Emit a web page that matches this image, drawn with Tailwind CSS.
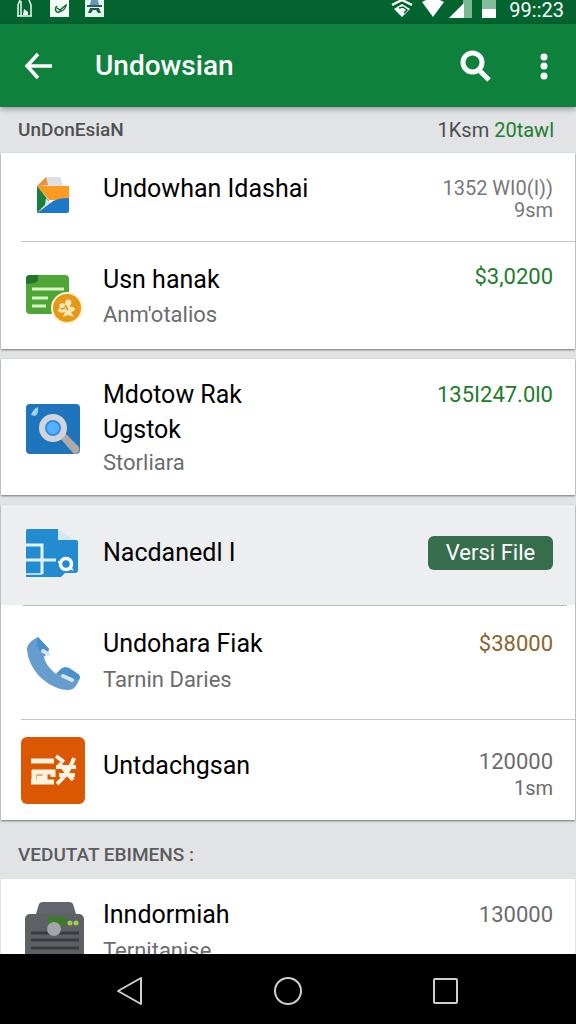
<!DOCTYPE html>
<html lang="id">
<head>
  <meta charset="UTF-8">
  <meta name="viewport" content="width=device-width, initial-scale=1.0">
  <title>Undowsian</title>
  <script src="https://cdn.jsdelivr.net/npm/@tailwindcss/browser@4"></script>
</head>
<body class="flex h-screen flex-col overflow-hidden bg-[#e2e3e5] font-['Roboto',sans-serif] text-black">

  <!-- Status bar -->
  <div class="flex h-6 shrink-0 items-start justify-between overflow-hidden bg-[#03642f] pr-3 pl-4 text-white">
    <div class="flex gap-4">
      <svg class="h-[18px] w-[18px]" viewBox="0 0 18 18" fill="none" stroke="#e9fff0" stroke-width="1.500">
        <path d="M4 0 2 5v11h13V5l-2-5M5 1v15M1 16h15" />
        <path d="M8 9 7 15h5v-3z" fill="#fff" stroke="none" />
      </svg>
      <svg class="h-[18px] w-[19px]" viewBox="0 0 19 18">
        <path d="M0 0h19v17H0z" fill="#f2fff5" />
        <path d="M7 6C4 9 6 13 9 12c4-1 7-4 7-7l-6 5-3-2" fill="none" stroke="#17673a" stroke-width="1.500" />
      </svg>
      <svg class="h-[18px] w-[19px]" viewBox="0 0 19 18">
        <path d="M0 0h19v17H0z" fill="#dffbea" />
        <path d="M6 0h7l1 5H5z" fill="#6c94b8" />
        <path d="M2 5h15v2H2z" fill="#34566d" />
        <path d="M5 8h9l2 5h-3l-2-3H8l-2 3H3z" fill="#1f5c42" />
      </svg>
    </div>
    <div class="flex">
      <svg class="mr-2 h-[18px] w-[22px]" viewBox="0 0 22 18" fill="none" stroke="#fff">
        <path d="M1 5 11 0l10 5" stroke-width="2.500" />
        <path d="m3 9 8-5 8 5-8 8z" fill="#fff" stroke="none" />
        <path d="m8 8 4-1 4 3-3 3" stroke="#03642f" stroke-width="1.500" />
      </svg>
      <svg class="mr-1 h-[18px] w-[24px]" viewBox="0 0 24 18"><path d="M1 2Q12-4 23 2L12 17z" fill="#fff" /></svg>
      <svg class="mr-2 h-[18px] w-[24px]" viewBox="0 0 24 18">
        <path d="M14 0h9v18h-9z" fill="#7cb893" />
        <path d="M0 18 15 3v15z" fill="#fff" />
      </svg>
      <svg class="mr-3 h-[18px] w-[16px]" viewBox="0 0 16 18">
        <path d="M1 0h14v9H1z" fill="#81bc98" />
        <path d="M1 9h14v9H1z" fill="#fff" />
      </svg>
      <span class="text-[20px] leading-5">99::23</span>
    </div>
  </div>

  <!-- App bar -->
  <header class="relative z-10 flex h-[83px] shrink-0 items-center bg-[#0e823d] pr-3 pl-[18px] text-white shadow-[0_2px_6px_rgba(0,0,0,0.35)]">
    <button type="button" aria-label="Back" class="flex h-10 w-10 items-center justify-center">
      <svg class="h-7 w-7" viewBox="0 0 28 28" fill="none" stroke="#fff" stroke-width="3.500">
        <path d="M28 14H3M14 2 3 14l11 12" />
      </svg>
    </button>
    <h1 class="flex-1 pl-[37px] text-[28px] leading-9 font-medium">Undowsian</h1>
    <button type="button" aria-label="Search" class="flex h-10 w-10 items-center justify-center">
      <svg class="h-8 w-8" viewBox="0 0 32 32" fill="none" stroke="#fff">
        <circle cx="12.500" cy="12.500" r="9.500" stroke-width="5" />
        <path d="m19 20 10 10" stroke-width="5" />
      </svg>
    </button>
    <button type="button" aria-label="More options" class="ml-7 flex h-10 w-10 items-center justify-center">
      <svg class="h-7 w-2" viewBox="0 0 8 28" fill="#fff">
        <circle cx="4" cy="5" r="3.500" /><circle cx="4" cy="14" r="3.500" /><circle cx="4" cy="24" r="3.500" />
      </svg>
    </button>
  </header>

  <main class="min-h-0 flex-1 overflow-hidden">
    <div class="flex h-[46px] items-center justify-between pr-[22px] pl-[18px]">
      <h2 class="text-[19px] font-medium text-[#505154]">UnDonEsiaN</h2>
      <p class="text-[20px] text-[#4c4d50]">1Ksm <span class="text-[#207d30]">20tawl</span></p>
    </div>

    <ul class="mx-px bg-white shadow-[0_1px_2px_rgba(0,0,0,0.5)]">
      <li class="flex h-[88px] pr-[22px] pl-5">
        <svg class="mt-[23px] h-10 w-16 shrink-0" viewBox="0 0 64 40">
          <path d="m16 10 10-9h13l3 9v8H16z" fill="#dedfe3" />
          <path d="m16 10 9-9 2 8z" fill="#e9903a" />
          <path d="M16 10h32v14H28z" fill="#fb9b22" />
          <path d="M16 10v27l12-12z" fill="#17813b" />
          <path d="m25 22 4 5-5 2z" fill="#dbe7ee" />
          <path d="M16 37 32 25q6-3 16-3v13q0 2-2 2z" fill="#1a79c8" />
        </svg>
        <p class="flex-1 pt-5 pl-[18px] text-[25px] leading-8">Undowhan Idashai</p>
        <p class="pt-6 text-right text-[20px] leading-[22px] text-[#77787a]">1352 WI0(I))<br>9sm</p>
      </li>
      <li class="ml-5 border-t border-[#c4c5c7]"></li>
      <li class="flex h-[107px] pr-[22px] pl-5">
        <svg class="mt-8 h-[52px] w-16 shrink-0" viewBox="0 0 64 52">
          <rect x="5" y="1" width="43" height="39" rx="4" fill="#4fa535" />
          <path d="M5 10V5q0-4 4-4h8v6q-4 3-9 3z" fill="#28732a" />
          <path d="M11 15h32M11 24h16M11 32h14" stroke="#d8f5c5" stroke-width="3" />
          <circle cx="46" cy="34" r="16" fill="#fff3cf" />
          <circle cx="46" cy="34" r="14" fill="#e69818" />
          <path d="M45 26c6-2 7 4 3 7 7-1 8 4 2 5l3 5-6-2-5 2 2-5c-7 2-9-2-5-4-2-4 1-6 5-4z" fill="#ffe9b5" />
          <path d="m44 31 3 5m-7-1 4-1" stroke="#db8b18" stroke-width="1.500" />
        </svg>
        <div class="flex-1 pt-5 pl-[18px]">
          <p class="text-[25px] leading-[35px]">Usn hanak</p>
          <p class="text-[22px] leading-9 text-[#6b6c6e]">Anm'otalios</p>
        </div>
        <p class="pt-[19px] text-[22px] leading-8 text-[#1c7d2a]">$3,0200</p>
      </li>
    </ul>

    <ul class="mx-px mt-[10px] bg-white shadow-[0_1px_2px_rgba(0,0,0,0.5)]">
      <li class="flex h-[136px] pr-[22px] pl-5">
        <svg class="mt-[44px] h-[52px] w-16 shrink-0" viewBox="0 0 64 52">
          <rect x="5" y="1" width="54" height="50" rx="4" fill="#1e74bd" />
          <path d="M10 12q2-6 7-8 1 7-3 9z" fill="#9bd4fa" />
          <path d="m38 34 6-4 14 14q2 7-5 7z" fill="#b2a8a5" />
          <circle cx="32" cy="25" r="11" fill="#2c8fe8" stroke="#d2d4da" stroke-width="6" />
          <circle cx="32" cy="25" r="6" fill="#56b2fb" />
        </svg>
        <div class="flex-1 pt-[18px] pl-[18px]">
          <p class="text-[25px] leading-[35px]">Mdotow Rak<br>Ugstok</p>
          <p class="text-[22px] leading-8 text-[#6b6c6e]">Storliara</p>
        </div>
        <p class="pt-5 text-[22px] leading-8 text-[#1c7d2a]">135I247.0l0</p>
      </li>
    </ul>

    <ul class="mx-px mt-[10px] bg-white shadow-[0_1px_2px_rgba(0,0,0,0.5)]">
      <li class="flex h-[100px] items-center bg-[#edeeef] pr-[22px] pb-1 pl-5">
        <svg class="h-[50px] w-16 shrink-0" viewBox="0 0 64 50">
          <path d="M5 3q0-2 2-2h30v11h18q2 0 2 2v28q0 3-3 3H44l-4 4H5z" fill="#238bd0" />
          <path d="M37 1v11h17z" fill="#d3e8f2" />
          <path d="M5 17h16v29M5 32h30" fill="none" stroke="#e2f3fb" stroke-width="3" />
          <path d="M5 46h16" stroke="#e2f3fb" stroke-width="1.500" />
          <circle cx="45" cy="36" r="5.500" fill="#238bd0" stroke="#fff" stroke-width="3.500" />
          <path d="M37 34h4m8 6 3 2" stroke="#fff" stroke-width="2" />
        </svg>
        <p class="flex-1 pl-[18px] text-[25px] leading-8">Nacdanedl I</p>
        <button type="button" class="h-[34px] w-[125px] rounded-md bg-[#366e4d] text-[22px] leading-8 text-white">Versi File</button>
      </li>
      <li class="mr-2 ml-[22px] border-t border-[#bcbdbf]"></li>
      <li class="flex h-[113px] pr-[22px] pl-5">
        <svg class="mt-7 h-[58px] w-16 shrink-0" viewBox="0 0 64 58">
          <path d="M6 14Q7 8 17 3L28 15l-1 3-4 5c1 6 6 12 12 17l5-5q3-3 8-1l9 6q3 2 1 6-4 11-12 10C24 54 6 33 6 14z" fill="#679cce" />
          <path d="m17 3 11 12-1 3-3 4-6-6q-4-6-1-13zM35 40l5-5q3-3 8-1l9 6q3 2 1 6l-5-1-9-4z" fill="#4891cc" />
          <path d="m42 42 9 4M22 17l5 3" stroke="#d7e5f5" stroke-width="4" stroke-linecap="round" />
        </svg>
        <div class="flex-1 pt-5 pl-[18px]">
          <p class="text-[25px] leading-9">Undohara Fiak</p>
          <p class="text-[22px] leading-9 text-[#6b6c6e]">Tarnin Daries</p>
        </div>
        <p class="pt-[22px] text-[22px] leading-8 text-[#8c642b]">$38000</p>
      </li>
      <li class="ml-5 border-t border-[#c4c5c7]"></li>
      <li class="flex h-[100px] pr-[22px] pl-5">
        <svg class="mt-4 h-[68px] w-16 shrink-0" viewBox="0 0 64 68">
          <rect y="1" width="64" height="67" rx="6" fill="#dc5702" />
          <g fill="none" stroke="#fff3e2" stroke-width="5">
            <path d="M10 25h23M10 46h23M13 34v14M11 36h21v5M24 36v10M16 42h9" />
            <path d="m35 20 8 6M35 31h20M53 22c-3 9-8 18-17 26M38 27l14 17M38 39h16" stroke-width="4" />
          </g>
        </svg>
        <p class="flex-1 pt-[30px] pl-[18px] text-[25px] leading-8">Untdachgsan</p>
        <p class="pt-[29px] text-right text-[22px] leading-[26px] text-[#6b6c6e]">120000<br><span class="text-[20px]">1sm</span></p>
      </li>
    </ul>

    <h2 class="flex h-[59px] items-center pt-3 pl-[18px] text-[19px] font-medium text-[#5a5b5e]">VEDUTAT EBIMENS :</h2>

    <ul class="mx-px bg-white">
      <li class="flex h-[107px] pr-[22px] pl-5">
        <svg class="mt-[23px] h-[70px] w-16 shrink-0" viewBox="0 0 64 70">
          <path d="m15 12 3-10q1-2 4-2h26q3 0 4 2l3 10z" fill="#62656b" />
          <rect x="4" y="12" width="59" height="58" rx="5" fill="#5d6065" />
          <path d="M27 15h18v9H27z" fill="#3d7b29" />
          <circle cx="49" cy="21" r="2.500" fill="#99d246" /><circle cx="55" cy="21" r="2.500" fill="#99d246" />
          <path d="M10 31h48M10 38h48M10 46h48" stroke="#393b40" stroke-width="3" />
          <circle cx="33" cy="27" r="7" fill="#a0a4ab" />
        </svg>
        <div class="flex-1 pt-[18px] pl-[18px]">
          <p class="text-[25px] leading-9">Inndormiah</p>
          <p class="text-[22px] leading-9 text-[#6b6c6e]">Ternitanise</p>
        </div>
        <p class="pt-5 text-[22px] leading-8 text-[#6b6c6e]">130000</p>
      </li>
    </ul>
  </main>

  <!-- Navigation bar -->
  <nav class="flex h-[70px] shrink-0 items-center justify-center gap-[118px] bg-black pt-1">
    <button type="button" aria-label="Back" class="flex h-10 w-10 items-center justify-center">
      <svg class="h-8 w-8" viewBox="0 0 32 32" fill="none" stroke="#cfcfca" stroke-width="2"><path d="M27 3v26L4 16z" stroke-linejoin="round" /></svg>
    </button>
    <button type="button" aria-label="Home" class="flex h-10 w-10 items-center justify-center">
      <svg class="h-8 w-8" viewBox="0 0 32 32" fill="none" stroke="#cfcfca" stroke-width="2"><circle cx="16" cy="16" r="13" /></svg>
    </button>
    <button type="button" aria-label="Recent apps" class="flex h-10 w-10 items-center justify-center">
      <svg class="h-8 w-8" viewBox="0 0 32 32" fill="none" stroke="#cfcfca" stroke-width="2"><rect x="4" y="4" width="23" height="24" rx="1" /></svg>
    </button>
  </nav>
</body>
</html>
